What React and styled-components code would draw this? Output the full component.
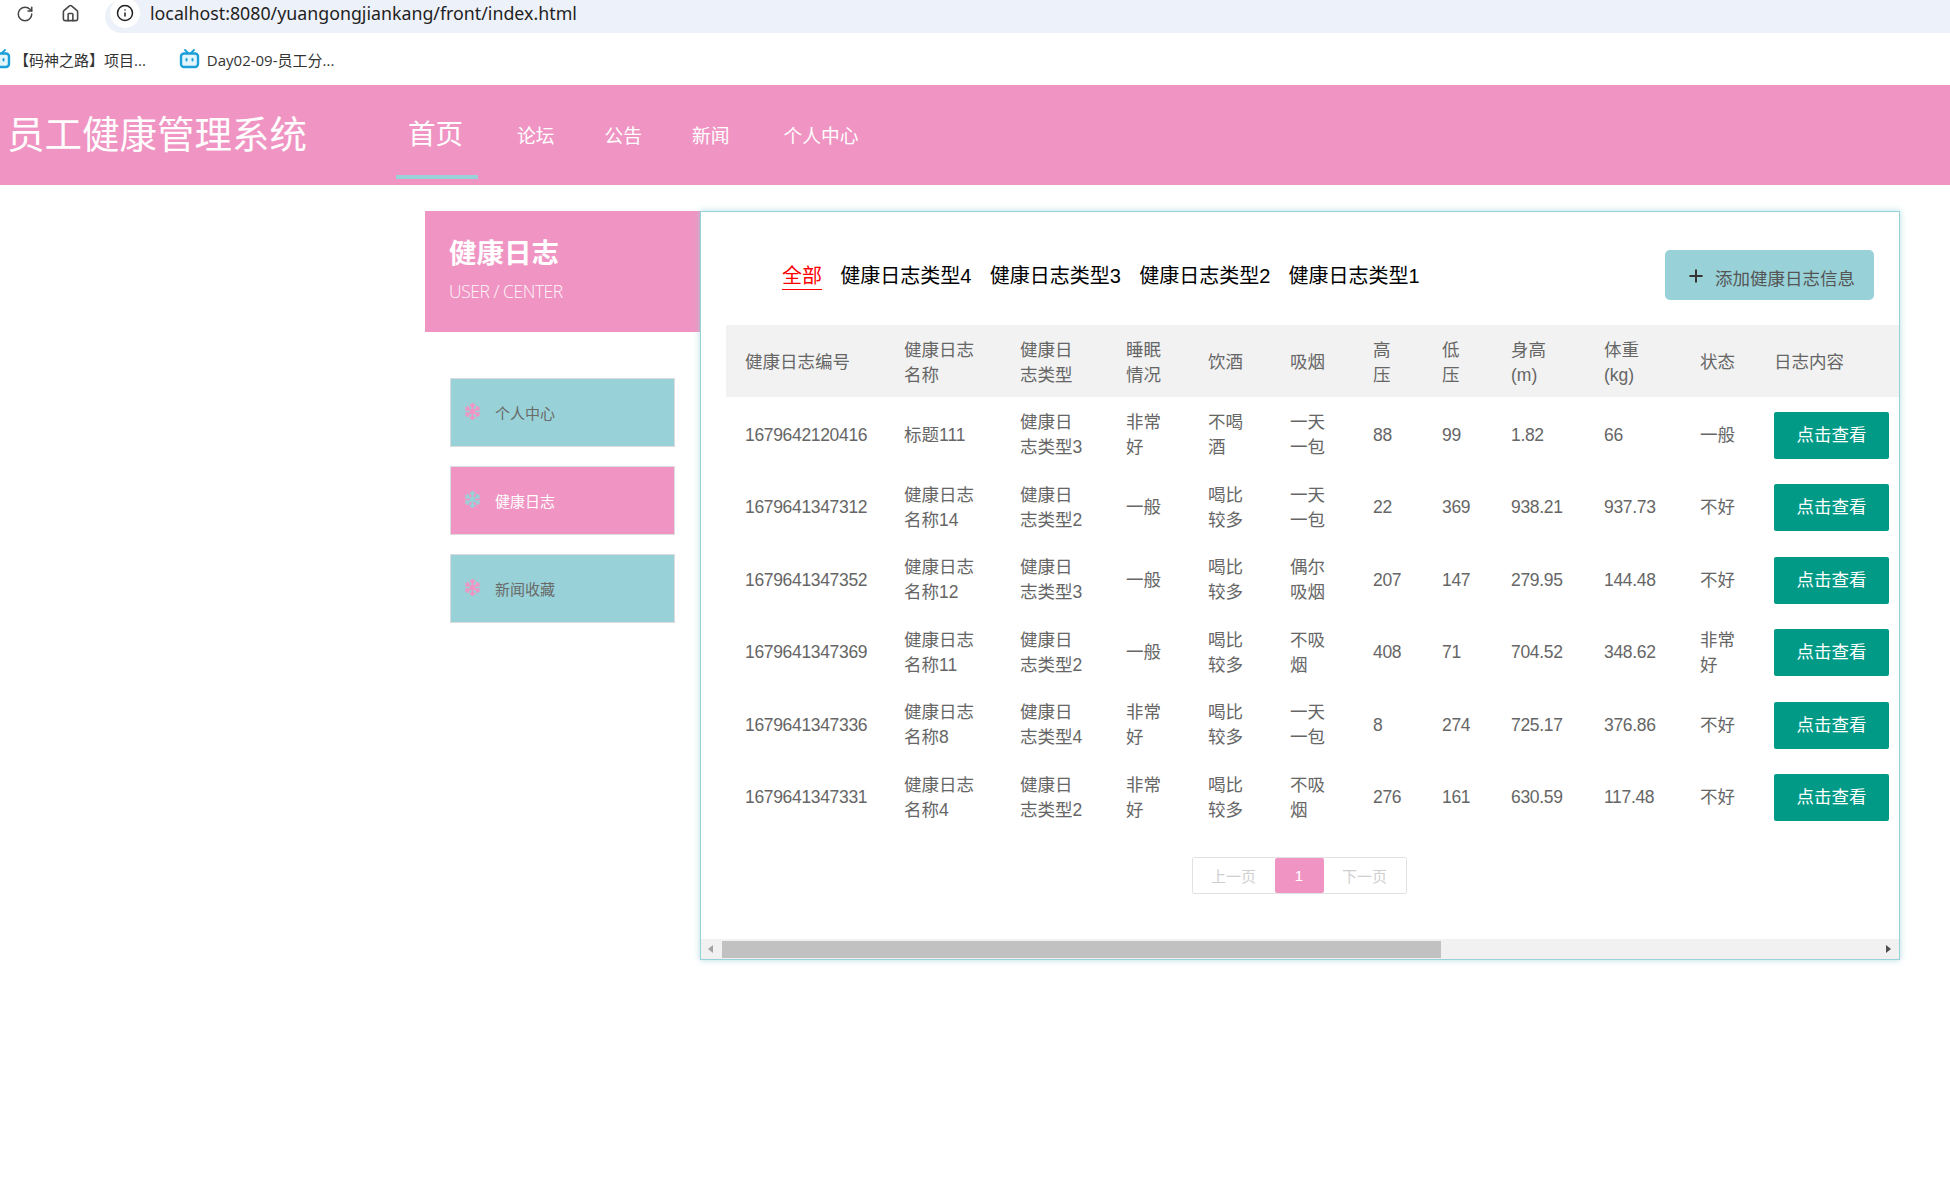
import React from "react";
import styled, { createGlobalStyle } from "styled-components";
import { RotateCw, House, Info, Plus } from "lucide-react";
import { FaSnowflake } from "react-icons/fa";

const Global = createGlobalStyle`
  html, body { margin: 0; padding: 0; background: #fff; overflow: hidden; }
  body { font-family: "Liberation Sans", "Noto Sans CJK SC", sans-serif; width: 1950px; height: 1197px; }
  * { box-sizing: border-box; }
`;

const PINK = "#f095c3";
const TEAL = "#98d2d8";

const AddressRow = styled.div`
  display: flex; align-items: center; height: 33px; background: #fff; padding-left: 16px;
`;
const ChromeBtn = styled.div`
  display: flex; width: 20px; margin: -6px 25px 0 0; color: #474747;
`;
const UrlBar = styled.div`
  flex: 1; height: 33px; margin-left: -1px; background: #edf1f9; border-radius: 17px 0 0 17px;
  display: flex; align-items: center; padding: 0 0 7px 5px;
  font-family: "Noto Sans", "Noto Sans CJK SC", sans-serif; font-size: 17.8px; color: #1f1f1f;
`;
const InfoDot = styled.div`
  width: 30px; height: 30px; border-radius: 50%; background: #fff; margin-right: 10px;
  display: flex; align-items: center; justify-content: center; color: #1f1f1f;
`;
const BookmarkRow = styled.div`
  display: flex; align-items: center; height: 52px; background: #fff; margin-left: -10px; gap: 33px;
  font-family: "Open Sans", "Noto Sans CJK SC", sans-serif; font-size: 15px; color: #333;
`;
const Bookmark = styled.div`
  display: flex; align-items: center; gap: ${p => p.$gap}px;
`;

const TvIcon = () => (
  <svg width="21" height="20" viewBox="0 0 21 20" fill="none">
    <path d="M6 1l3 3M15 1l-3 3" stroke="#1a9fd9" strokeWidth="1.8" strokeLinecap="round" />
    <rect x="2" y="4.5" width="17" height="13.5" rx="3" stroke="#1a9fd9" strokeWidth="2.4" fill="#e3f4fb" />
    <rect x="6.5" y="9" width="2" height="3.6" rx="1" fill="#1a9fd9" />
    <rect x="12.5" y="9" width="2" height="3.6" rx="1" fill="#1a9fd9" />
  </svg>
);

const Header = styled.header`
  display: flex; height: 100px; background: ${PINK}; color: #fff;
`;
const Brand = styled.div`
  width: 396px; padding-left: 7px; font-size: 37.5px; line-height: 100px; font-weight: 400; opacity: .98;
`;
const Nav = styled.nav`
  display: flex; align-items: flex-start;
`;
const NavItem = styled.div`
  height: 94px; display: flex; justify-content: center; align-items: center;
  padding: ${p => (p.$active ? "4px 15px 0 12px" : "8px 25px 0")};
  font-size: ${p => (p.$active ? "27.5px" : "18.75px")};
  border-bottom: 4px solid ${p => (p.$active ? TEAL : "transparent")};
  margin-right: ${p => (p.$active ? "14px" : "0")};
  &:last-child { margin-left: 4px; }
`;

const Content = styled.div`
  display: flex; align-items: flex-start; padding: 26px 0 0 425px;
`;
const Sidebar = styled.aside`
  width: 275px;
`;
const SideHead = styled.div`
  height: 121px; background: ${PINK}; color: #fff; padding: 25px 25px 0 24px;
`;
const SideTitle = styled.div`
  font-size: 27.5px; line-height: 36px; font-weight: 700;
`;
const SideSub = styled.div`
  font-size: 17.5px; line-height: 24px; margin-top: 7px; font-weight: 300; letter-spacing: -0.45px;
  font-family: "Open Sans", sans-serif; opacity: .92;
`;
const SideList = styled.div`
  display: flex; flex-direction: column; gap: 19px; margin: 46px 25px 0;
`;
const SideItem = styled.div`
  height: 69px; display: flex; align-items: center; padding-left: 13px; gap: 14px;
  background: ${p => (p.$active ? PINK : TEAL)};
  border: 1px solid #dcdcdc;
  color: ${p => (p.$active ? "#fff" : "#6a6a6a")};
  font-size: 15px;
  svg { color: ${p => (p.$active ? TEAL : PINK)}; margin-top: -2px; }
`;

const Main = styled.main`
  width: 1200px; height: 749px; display: flex; flex-direction: column;
  border: 1px solid ${TEAL}; box-shadow: 0 0 6px rgba(152, 210, 216, .75); background: #fff; overflow: hidden;
`;
const Toolbar = styled.div`
  display: flex; align-items: center; justify-content: space-between; height: 113px;
  padding: 38px 25px 25px 81px;
`;
const Tabs = styled.div`
  display: flex; gap: 18.3px; margin-top: 3px;
`;
const Tab = styled.div`
  font-size: 20px; line-height: 26px; height: 27px;
  color: ${p => (p.$active ? "#f00" : "#000")};
  border-bottom: 1px solid ${p => (p.$active ? "#f00" : "transparent")};
`;
const AddBtn = styled.div`
  width: 209px; height: 50px; border-radius: 5px; background: ${TEAL}; color: #555;
  display: flex; align-items: center; padding: 4px 0 0 21px; gap: 9px; font-size: 17.5px;
  svg { margin-top: -2px; color: #333; }
`;
const TableClip = styled.div`
  margin-left: 25px; overflow: hidden; height: 507px; flex: none;
`;
const Table = styled.table`
  width: 1174px; table-layout: fixed; border-collapse: collapse; font-size: 17.5px; line-height: 25px; color: #666;
`;
const Th = styled.th`
  height: 72px; padding: 3px 19px 0; background: #f2f2f2; font-weight: 400; text-align: left;
`;
const Td = styled.td`
  height: 72.5px; padding: 4px 19px 0; vertical-align: middle;
  letter-spacing: ${p => (p.$num ? "-0.33px" : "0")};
`;
const ViewBtn = styled.div`
  width: 115px; height: 47px; border-radius: 2px; background: #009a87; color: #fff;
  display: flex; align-items: center; justify-content: center; font-size: 17.5px;
`;
const PagerRow = styled.div`
  display: flex; justify-content: center; margin-top: 25px; margin-right: 2px;
`;
const Pager = styled.div`
  display: flex; height: 37px; border: 1px solid #e2e2e2; border-radius: 2px; font-size: 15px; color: #cfcfcf;
`;
const PageBtn = styled.div`
  display: flex; align-items: center; justify-content: center; height: 100%;
  width: ${p => (p.$active ? "49px" : "82px")};
  background: ${p => (p.$active ? PINK : "#fff")};
  color: ${p => (p.$active ? "#fff" : "#cfcfcf")};
  border-radius: ${p => (p.$active ? "2px" : "0")};
`;
const ScrollTrack = styled.div`
  margin-top: auto; height: 20px; background: #f1f1f1; display: flex; align-items: center; flex: none;
`;
const ScrollArrow = styled.div`
  width: 0; height: 0; border-top: 4px solid transparent; border-bottom: 4px solid transparent;
  ${p => (p.$dir === "left"
    ? "border-right: 5px solid #a3a3a3; margin: 0 9px 0 7px;"
    : "border-left: 5px solid #505050; margin: 0 8px 0 auto;")}
`;
const ScrollThumb = styled.div`
  width: 719px; height: 17px; background: #c1c1c1;
`;

const columns = [159, 116, 106, 82, 82, 83, 69, 69, 93, 96, 74, 145];
const heads = [
  "健康日志编号", "健康日志名称", "健康日志类型", "睡眠情况", "饮酒", "吸烟", "高压", "低压",
  <>身高<br />(m)</>, <>体重<br />(kg)</>, "状态", "日志内容",
];
const rows = [
  ["1679642120416", "标题111", "健康日志类型3", "非常好", "不喝酒", "一天一包", "88", "99", "1.82", "66", "一般"],
  ["1679641347312", "健康日志名称14", "健康日志类型2", "一般", "喝比较多", "一天一包", "22", "369", "938.21", "937.73", "不好"],
  ["1679641347352", "健康日志名称12", "健康日志类型3", "一般", "喝比较多", "偶尔吸烟", "207", "147", "279.95", "144.48", "不好"],
  ["1679641347369", "健康日志名称11", "健康日志类型2", "一般", "喝比较多", "不吸烟", "408", "71", "704.52", "348.62", "非常好"],
  ["1679641347336", "健康日志名称8", "健康日志类型4", "非常好", "喝比较多", "一天一包", "8", "274", "725.17", "376.86", "不好"],
  ["1679641347331", "健康日志名称4", "健康日志类型2", "非常好", "喝比较多", "不吸烟", "276", "161", "630.59", "117.48", "不好"],
];
const tabs = ["全部", "健康日志类型4", "健康日志类型3", "健康日志类型2", "健康日志类型1"];

export default function App() {
  return (
    <>
      <Global />
      <AddressRow>
        <ChromeBtn><RotateCw size={18} strokeWidth={2} /></ChromeBtn>
        <ChromeBtn><House size={19} strokeWidth={2} /></ChromeBtn>
        <UrlBar>
          <InfoDot><Info size={18} strokeWidth={2} /></InfoDot>
          localhost:8080/yuangongjiankang/front/index.html
        </UrlBar>
      </AddressRow>
      <BookmarkRow>
        <Bookmark $gap={3}><TvIcon />【码神之路】项目...</Bookmark>
        <Bookmark $gap={7}><TvIcon />Day02-09-员工分...</Bookmark>
      </BookmarkRow>
      <Header>
        <Brand>员工健康管理系统</Brand>
        <Nav>
          <NavItem $active>首页</NavItem>
          <NavItem>论坛</NavItem>
          <NavItem>公告</NavItem>
          <NavItem>新闻</NavItem>
          <NavItem>个人中心</NavItem>
        </Nav>
      </Header>
      <Content>
        <Sidebar>
          <SideHead>
            <SideTitle>健康日志</SideTitle>
            <SideSub>USER / CENTER</SideSub>
          </SideHead>
          <SideList>
            <SideItem><FaSnowflake size={17} />个人中心</SideItem>
            <SideItem $active><FaSnowflake size={17} />健康日志</SideItem>
            <SideItem><FaSnowflake size={17} />新闻收藏</SideItem>
          </SideList>
        </Sidebar>
        <Main>
          <Toolbar>
            <Tabs>
              {tabs.map((t, i) => <Tab key={t} $active={i === 0}>{t}</Tab>)}
            </Tabs>
            <AddBtn><Plus size={20} strokeWidth={2.4} />添加健康日志信息</AddBtn>
          </Toolbar>
          <TableClip>
            <Table>
              <colgroup>
                {columns.map((w, i) => <col key={i} width={w} />)}
              </colgroup>
              <thead>
                <tr>{heads.map((h, i) => <Th key={i}>{h}</Th>)}</tr>
              </thead>
              <tbody>
                {rows.map(r => (
                  <tr key={r[0]}>
                    {r.map((c, i) => <Td key={i} $num={/^[\d.]+$/.test(c)}>{c}</Td>)}
                    <Td><ViewBtn>点击查看</ViewBtn></Td>
                  </tr>
                ))}
              </tbody>
            </Table>
          </TableClip>
          <PagerRow>
            <Pager>
              <PageBtn>上一页</PageBtn>
              <PageBtn $active>1</PageBtn>
              <PageBtn>下一页</PageBtn>
            </Pager>
          </PagerRow>
          <ScrollTrack>
            <ScrollArrow $dir="left" />
            <ScrollThumb />
            <ScrollArrow $dir="right" />
          </ScrollTrack>
        </Main>
      </Content>
    </>
  );
}
